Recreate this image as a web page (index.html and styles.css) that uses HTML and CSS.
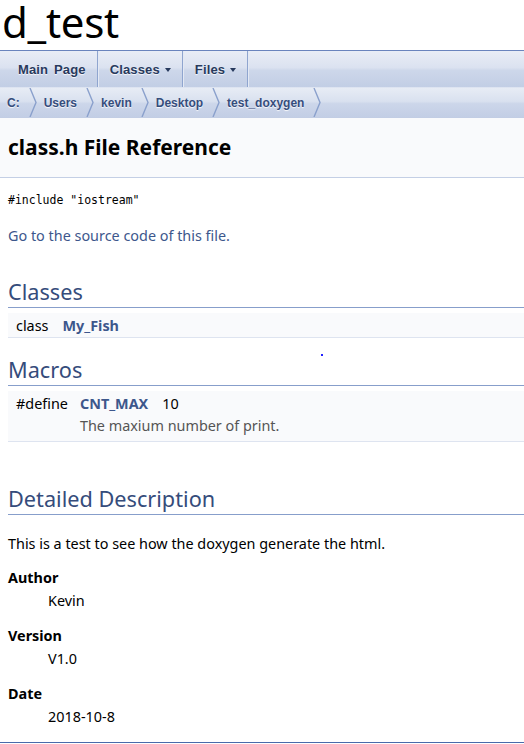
FILE: index.html
```html
<!DOCTYPE html>
<html>
<head>
<meta charset="utf-8">
<title>d_test: class.h File Reference</title>
<link rel="stylesheet" href="styles.css">
</head>
<body>
<div class="projectname">d_test</div>
<div class="tabs">
  <ul class="tablist">
    <li><a href="#">Main Page</a></li>
    <li><a href="#">Classes<span class="caret"></span></a></li>
    <li><a href="#">Files<span class="caret"></span></a></li>
  </ul>
</div>
<div class="navpath">
  <ul>
    <li><a href="#">C:</a><svg class="chev" viewBox="0 0 8 29" width="8" height="29"><polyline points="1,0 7,14.5 1,29" /></svg></li>
    <li><a href="#">Users</a><svg class="chev" viewBox="0 0 8 29" width="8" height="29"><polyline points="1,0 7,14.5 1,29" /></svg></li>
    <li><a href="#">kevin</a><svg class="chev" viewBox="0 0 8 29" width="8" height="29"><polyline points="1,0 7,14.5 1,29" /></svg></li>
    <li><a href="#">Desktop</a><svg class="chev" viewBox="0 0 8 29" width="8" height="29"><polyline points="1,0 7,14.5 1,29" /></svg></li>
    <li><a href="#">test_doxygen</a><svg class="chev" viewBox="0 0 8 29" width="8" height="29"><polyline points="1,0 7,14.5 1,29" /></svg></li>
  </ul>
</div>
<div class="header">
  <div class="headertitle">class.h File Reference</div>
</div>
<div class="contents">
  <div class="include"><code>#include "iostream"</code></div>
  <p class="srclink"><a href="#">Go to the source code of this file.</a></p>

  <h2 class="groupheader">Classes</h2>
  <div class="memberdecls">
    <div class="memrow">
      <span class="memleft wide">class</span>
      <span class="memright"><a class="el" href="#">My_Fish</a></span>
    </div>
  </div>

  <h2 class="groupheader">Macros</h2>
  <div class="memberdecls">
    <div class="memrow tall">
      <span class="memleft">#define</span>
      <span class="memright"><a class="el" href="#">CNT_MAX</a><span class="macroval">10</span></span>
      <span class="memdesc">The maxium number of print.</span>
    </div>
  </div>

  <h2 class="groupheader detail">Detailed Description</h2>
  <p class="desc">This is a test to see how the doxygen generate the html.</p>
  <dl class="section">
    <dt>Author</dt>
    <dd>Kevin</dd>
    <dt>Version</dt>
    <dd>V1.0</dd>
    <dt>Date</dt>
    <dd>2018-10-8</dd>
  </dl>
</div>
<hr class="footer">
<span class="stray-dot"></span>
</body>
</html>
```

FILE: styles.css
```css
html, body {
  margin: 0;
  padding: 0;
  background: #ffffff;
}

body {
  font-family: "Noto Sans", "Open Sans", sans-serif;
  font-size: 14.4px;
  color: #000;
  position: relative;
}

a {
  text-decoration: none;
}

.projectname {
  font-family: "Noto Sans", sans-serif;
  font-size: 42px;
  line-height: 44px;
  height: 50px;
  padding-left: 2px;
  letter-spacing: -0.3px;
}

.tabs {
  border-top: 1px solid #6a84bd;
  height: 36px;
  background: linear-gradient(#e9edf6 0%, #dbe2f0 46%, #cdd7ea 54%, #c2cee5 100%);
  font-family: "Liberation Sans", Arial, sans-serif;
}

.tablist {
  list-style: none;
  margin: 0;
  padding: 0 0 0 6px;
  display: flex;
  height: 36px;
}

.tablist li {
  display: flex;
  border-right: 1px solid #8fa5cf;
  box-shadow: 1px 0 0 #e3e9f4;
}

.tablist a {
  display: flex;
  align-items: center;
  padding: 0 11px 0 12px;
  font-size: 13px;
  font-weight: bold;
  word-spacing: 2px;
  letter-spacing: 0.15px;
  color: #283a5d;
  text-shadow: 0 1px 1px rgba(255, 255, 255, 0.9);
}

.caret {
  display: inline-block;
  width: 0;
  height: 0;
  margin-left: 5px;
  border-left: 3.5px solid transparent;
  border-right: 3.5px solid transparent;
  border-top: 4px solid #283a5d;
  margin-top: 1px;
}

.navpath {
  border-top: 1px solid #dde4f1;
  border-bottom: 1px solid #c2cde4;
  height: 29px;
  background: linear-gradient(#e7ecf5 0%, #d9e1ef 46%, #ccd6ea 54%, #c3cee5 100%);
  font-family: "Liberation Sans", Arial, sans-serif;
}

.navpath ul {
  list-style: none;
  margin: 0;
  padding: 0;
  display: flex;
  height: 29px;
}

.navpath li {
  display: flex;
  align-items: center;
  padding-left: 7px;
}

.navpath a {
  font-size: 12px;
  font-weight: bold;
  color: #364d7c;
  text-shadow: 0 1px 1px rgba(255, 255, 255, 0.9);
}

.chev {
  margin-left: 9px;
  display: block;
}

.chev polyline {
  fill: none;
  stroke: #8aa0cc;
  stroke-width: 1.4;
}

.header {
  background: #f9fafc;
  border-bottom: 1px solid #c4cfe5;
  height: 59px;
  display: flex;
  align-items: center;
}

.headertitle {
  padding-left: 8px;
  padding-bottom: 1px;
  font-size: 21px;
  font-weight: bold;
}

.contents {
  padding-left: 8px;
}

.include {
  margin-top: 13px;
  height: 18px;
  display: flex;
  align-items: center;
}

.include code {
  font-family: "DejaVu Sans Mono", "Liberation Mono", monospace;
  font-size: 11.5px;
}

.srclink {
  margin: 17px 0 0 0;
  line-height: 20px;
}

.srclink a {
  color: #3d578c;
}

.groupheader {
  font-size: 21.7px;
  font-weight: normal;
  color: #354c7b;
  border-bottom: 1px solid #879ecb;
  margin: 0;
  line-height: 30px;
  padding: 0;
}

.srclink + .groupheader {
  margin-top: 31px;
}

.memberdecls {
  margin-top: 5px;
}

.memrow {
  background: #f9fafc;
  border-bottom: 1px solid #dee4f0;
  display: grid;
  grid-template-columns: auto 1fr;
  align-items: center;
  height: 24px;
}

.memrow.tall {
  height: 50px;
  grid-template-rows: 24px 24px;
  align-content: start;
}

.memleft {
  padding-left: 8px;
  padding-right: 12px;
  align-self: center;
}

.memleft.wide {
  padding-right: 14px;
}

.memright {
  align-self: center;
}

.macroval {
  padding-left: 14px;
}

.memdesc {
  grid-column: 2;
  color: #555;
  align-self: start;
  padding-top: 1px;
}

.el {
  font-weight: bold;
  color: #3d578c;
}

.memberdecls + .groupheader {
  margin-top: 17px;
}

.groupheader.detail {
  margin-top: 42px;
}

.desc {
  margin: 19px 0 0 0;
  line-height: 20px;
}

.section {
  margin: 14px 0 0 0;
}

.section dt {
  font-weight: bold;
  line-height: 20px;
}

.section dd {
  margin: 3px 0 0 40px;
  line-height: 20px;
}

.section dd + dt {
  margin-top: 15px;
}

.footer {
  border: 0;
  border-top: 1px solid #4a6aaa;
  margin: 15px 0 0 0;
  height: 0;
}

.stray-dot {
  position: absolute;
  left: 321px;
  top: 354px;
  width: 2px;
  height: 2px;
  background: #2020ff;
}
```
